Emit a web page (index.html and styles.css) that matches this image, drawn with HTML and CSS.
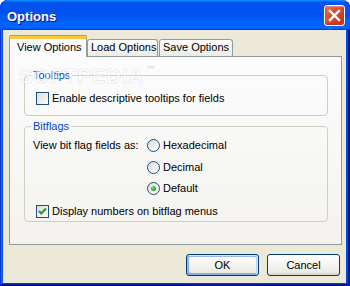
FILE: index.html
```html
<!DOCTYPE html>
<html>
<head>
<meta charset="utf-8">
<link rel="stylesheet" href="styles.css">
</head>
<body>
<div class="window">
  <div class="titlebar">
    <span class="title">Options</span>
    <span class="close" aria-label="Close">
      <svg width="21" height="21" viewBox="0 0 21 21"><path d="M6 6 L15 15 M15 6 L6 15" stroke="#fff" stroke-width="2.4" stroke-linecap="square"/></svg>
    </span>
  </div>
  <div class="client">
    <div class="tabs">
      <div class="tab active">View Options</div>
      <div class="tab load">Load Options</div>
      <div class="tab save">Save Options</div>
    </div>
    <div class="panel">
      <fieldset class="group tooltips">
        <legend>Tooltips</legend>
        <div class="group-body">
          <label class="check"><span class="box"></span>Enable descriptive tooltips for fields</label>
        </div>
      </fieldset>
      <fieldset class="group bitflags">
        <legend>Bitflags</legend>
        <div class="group-body">
          <div class="viewas">
            <span class="viewas-label">View bit flag fields as:</span>
            <div class="radios">
              <label class="radio"><span class="ring"></span>Hexadecimal</label>
              <label class="radio"><span class="ring"></span>Decimal</label>
              <label class="radio"><span class="ring on"></span>Default</label>
            </div>
          </div>
          <label class="check menus"><span class="box"><svg width="11" height="11" viewBox="0 0 11 11"><path d="M2 5 L4.3 7.5 L9 2.5" fill="none" stroke="#21A121" stroke-width="2.2"/></svg></span>Display numbers on bitflag menus</label>
        </div>
      </fieldset>
      <div class="watermark">SOFTPEDIA<span class="tm">™</span></div>
    </div>
    <div class="buttons">
      <span class="btn default">OK</span>
      <span class="btn">Cancel</span>
    </div>
  </div>
</div>
</body>
</html>
```

FILE: styles.css
```css
html, body {
  margin: 0;
  padding: 0;
  background: #ffffff;
}

body {
  font-family: "Liberation Sans", Arial, sans-serif;
  font-size: 11px;
  line-height: 13px;
  color: #000;
}

.window {
  width: 350px;
  height: 286px;
  box-sizing: border-box;
  display: flex;
  flex-direction: column;
  background: #0054E3;
  border-radius: 8px 8px 0 0;
  box-shadow: inset -1px -1px #00138c, inset 1px 0 #0831d9, inset -2px -2px #001ea0, inset 2px 0 #166aee, inset -3px -3px #003bda, inset 3px 0 #0855dd;
  overflow: hidden;
}

.titlebar {
  height: 30px;
  flex: none;
  display: flex;
  align-items: center;
  justify-content: space-between;
  padding: 0 5px 0 7px;
  border-radius: 8px 7px 0 0;
  background: linear-gradient(180deg, #0997ff, #0053ee 8%, #0050ee 40%, #06f 88%, #06f 93%, #005bff 95%, #003dd7 96%, #003dd7);
}

.title {
  color: #fff;
  font-weight: bold;
  font-size: 13px;
  padding-top: 2px;
  text-shadow: 1px 1px #0f1089;
}

.close {
  width: 21px;
  height: 21px;
  box-sizing: border-box;
  border: 1px solid #fff;
  border-radius: 3px;
  background: radial-gradient(circle at 85% 85%, #c9341a 0%, #dc4a2e 55%, #e8826a 100%);
  box-shadow: inset 0 -1px 2px 1px #c23a1e, inset 1px 1px 1px #f2a58f;
  display: flex;
  align-items: center;
  justify-content: center;
}

.close svg {
  margin: -1px;
}

.client {
  flex: 1;
  margin: 0 4px 3px 3px;
  padding: 6px 4px 0 6px;
  background: #ECE9D8;
  display: flex;
  flex-direction: column;
}

.tabs {
  display: flex;
  align-items: flex-end;
  height: 20px;
  position: relative;
  z-index: 1;
}

.tab {
  box-sizing: border-box;
  height: 17px;
  border: 1px solid #919B9C;
  border-bottom: none;
  border-radius: 3px 3px 0 0;
  background: linear-gradient(180deg, #ffffff, #f3f3ef 60%, #ecebe6);
  padding-top: 1px;
  text-align: left;
  white-space: nowrap;
}

.tab.active {
  height: 21px;
  margin-bottom: -1px;
  width: 78px;
  border-top: 3px solid #FFC73C;
  box-shadow: 0 -1px 0 #E68B2C;
  border-radius: 2px 2px 0 0;
  background: #FCFCFE;
  padding-top: 2px;
  padding-left: 7px;
}

.tab.load {
  width: 71px;
  padding-left: 3px;
}

.tab.save {
  width: 74px;
  margin-left: 1px;
  padding-left: 3px;
}

.panel {
  position: relative;
  box-sizing: border-box;
  height: 189px;
  border: 1px solid #919B9C;
  background: linear-gradient(180deg, #FCFCFE, #F4F3EE);
  padding: 12px 13px 0 14px;
  flex: none;
}

.group {
  margin: 0;
  padding: 0;
  border: 1px solid #D0D0BF;
  border-radius: 4px;
  min-width: 0;
}

.group legend {
  color: #0046D5;
  margin-left: 6px;
  padding: 0 2px;
  line-height: 13px;
}

.tooltips .group-body {
  padding: 10px 0 10px 11px;
}

.bitflags {
  margin-top: 4px;
}

.bitflags .group-body {
  padding: 6px 0 3px 8px;
}

.check {
  display: flex;
  align-items: center;
  height: 13px;
}

.check .box {
  box-sizing: border-box;
  width: 13px;
  height: 13px;
  border: 1px solid #1C5180;
  background: linear-gradient(135deg, #DCDCD7 0%, #FFFFFF 100%);
  margin-right: 3px;
  display: flex;
  align-items: center;
  justify-content: center;
  flex: none;
}

.check.menus {
  margin-left: 3px;
  margin-top: 10px;
}

.viewas {
  display: grid;
  grid-template-columns: 114px auto;
  align-items: start;
}

.radios {
  display: flex;
  flex-direction: column;
  gap: 8.5px;
}

.radio {
  display: flex;
  align-items: center;
  height: 13px;
}

.ring {
  box-sizing: border-box;
  width: 13px;
  height: 13px;
  border-radius: 50%;
  border: 1px solid #1C5180;
  background: linear-gradient(135deg, #DCDCD7 0%, #FFFFFF 100%);
  margin-right: 3px;
  flex: none;
  display: flex;
  align-items: center;
  justify-content: center;
}

.ring.on::after {
  content: "";
  width: 5px;
  height: 5px;
  border-radius: 50%;
  background: radial-gradient(circle at 35% 35%, #7EE07E 0%, #2FB12F 50%, #1A8F1A 100%);
}

.watermark {
  position: absolute;
  left: 9px;
  top: 8px;
  font-size: 21px;
  line-height: 22px;
  font-weight: bold;
  letter-spacing: 0.5px;
  color: rgba(255, 255, 255, 0.5);
  -webkit-text-stroke: 0.7px rgba(140, 140, 140, 0.22);
  pointer-events: none;
}

.watermark .tm {
  font-size: 9px;
  vertical-align: top;
  line-height: 9px;
  margin-left: 2px;
  -webkit-text-stroke: 0;
  color: rgba(140, 140, 140, 0.3);
}

.buttons {
  display: flex;
  justify-content: flex-end;
  gap: 8px;
  margin-top: 9px;
  margin-right: 2px;
}

.btn {
  box-sizing: border-box;
  width: 73px;
  height: 22px;
  border: 1px solid #003C74;
  border-radius: 3px;
  background: linear-gradient(180deg, #fff, #ecebe6 86%, #d6d0c5);
  display: flex;
  align-items: center;
  justify-content: center;
}

.btn.default {
  box-shadow: inset -1px 1px #cee7ff, inset 1px 2px #98b8ea, inset -2px 2px #bcd4f6, inset 1px -1px #89ade4, inset 2px -2px #89ade4;
}
```
